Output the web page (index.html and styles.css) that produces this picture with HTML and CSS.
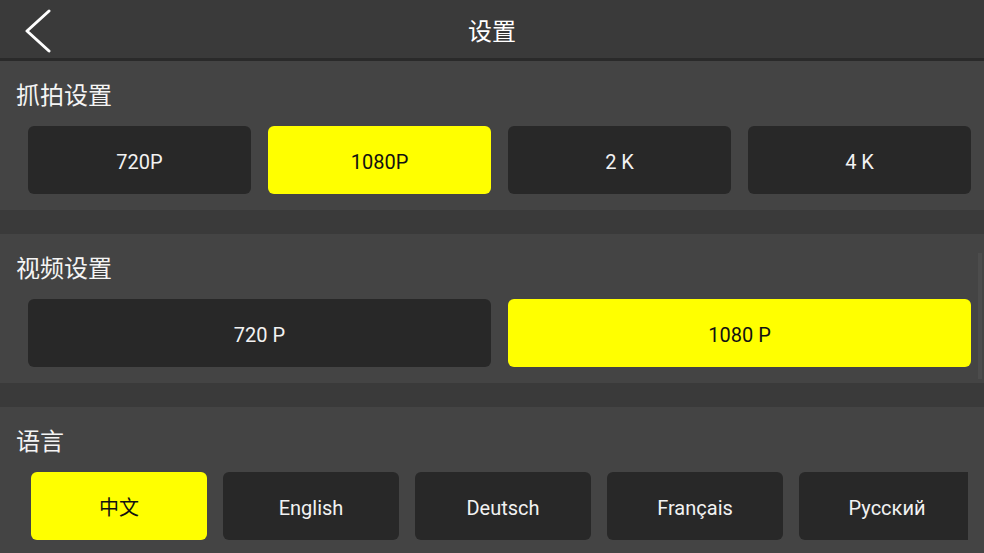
FILE: index.html
```html
<!DOCTYPE html>
<html lang="zh">
<head>
<meta charset="utf-8">
<title>设置</title>
<link rel="stylesheet" href="styles.css">
</head>
<body>
<div class="app">
  <header class="topbar">
    <svg class="back" width="28" height="44" viewBox="0 0 28 44">
      <polyline points="25,2 3,22 25,42" fill="none" stroke="#ffffff" stroke-width="3" stroke-linecap="round" stroke-linejoin="round"/>
    </svg>
    <div class="title">设置</div>
  </header>
  <section class="group">
    <div class="group-title">抓拍设置</div>
    <div class="row row4">
      <div class="btn">720P</div>
      <div class="btn on">1080P</div>
      <div class="btn">2 K</div>
      <div class="btn">4 K</div>
    </div>
  </section>
  <div class="spacer"></div>
  <section class="group">
    <div class="group-title">视频设置</div>
    <div class="row row2">
      <div class="btn">720 P</div>
      <div class="btn on">1080 P</div>
    </div>
  </section>
  <div class="spacer"></div>
  <section class="group">
    <div class="group-title">语言</div>
    <div class="langs">
      <div class="btn lang on">中文</div>
      <div class="btn lang">English</div>
      <div class="btn lang">Deutsch</div>
      <div class="btn lang">Français</div>
      <div class="btn lang">Русский</div>
    </div>
  </section>
  <div class="scrollbar"></div>
</div>
</body>
</html>
```
FILE: styles.css
```css
* { box-sizing: border-box; }
html, body { margin: 0; padding: 0; }
body {
  background: #444444;
  font-family: Roboto, "Noto Sans CJK SC", sans-serif;
  color: #f2f2f2;
  width: 984px;
  height: 553px;
  overflow: hidden;
}
.app { position: relative; width: 984px; height: 553px; overflow: hidden; }
.topbar {
  position: relative;
  height: 61px;
  background: #3a3a3a;
  border-bottom: 3px solid #2a2a2a;
  display: flex;
  align-items: center;
  justify-content: center;
}
.back { position: absolute; left: 24px; top: 9px; }
.title {
  font-family: "Noto Sans CJK SC", sans-serif;
  font-size: 24px;
  color: #ffffff;
  line-height: 30px;
  margin-top: 2px;
}
.group {
  background: #444444;
  padding: 13px 0 16px 0;
}
.group-title {
  font-family: "Noto Sans CJK SC", sans-serif;
  font-size: 24px;
  line-height: 40px;
  padding-left: 16px;
  color: #f4f4f4;
  margin-bottom: 12px;
}
.spacer { height: 24px; background: #3a3a3a; }
.row { display: flex; gap: 17px; padding: 0 13px 0 28px; }
.row .btn { flex: 1 1 0; }
.btn {
  height: 68px;
  border-radius: 6px;
  background: #282828;
  color: #f2f2f2;
  font-size: 20px;
  padding-top: 3px;
  display: flex;
  align-items: center;
  justify-content: center;
}
.btn.on { background: #ffff00; color: #111111; }
.langs {
  display: flex;
  gap: 16px;
  margin-left: 31px;
  width: 937px;
  overflow: hidden;
}
.lang { flex: 0 0 176px; }
.lang:first-child { font-family: "Noto Sans CJK SC", sans-serif; font-size: 20px; padding-top: 1px; }
.scrollbar {
  position: absolute;
  left: 978px;
  top: 253px;
  width: 4px;
  height: 126px;
  background: #4c4c4c;
}
```
